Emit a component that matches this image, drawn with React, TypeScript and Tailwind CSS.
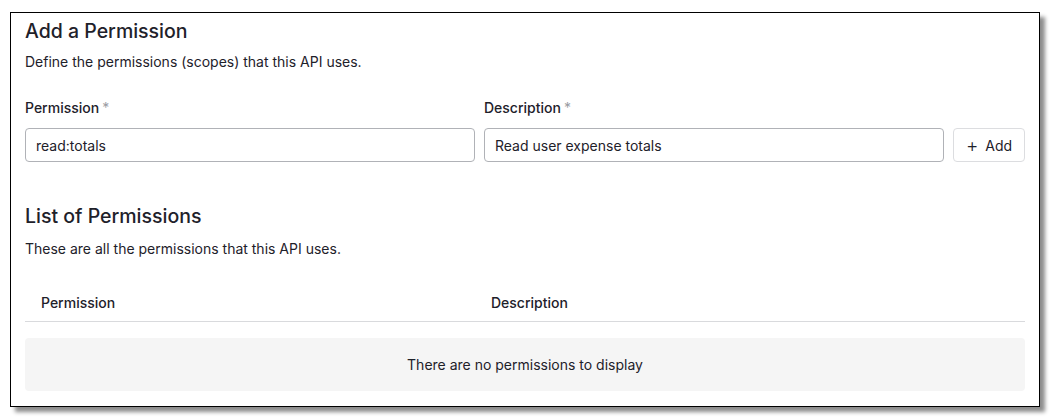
import React from "react";

export default function App() {
  return (
    <div className="w-[1050px] h-[420px] bg-white pt-[12px] pl-[10px]" style={{ fontFamily: "Inter, 'Noto Sans', sans-serif" }}>
      <div className="w-[1030px] h-[395px] border border-black bg-white shadow-[5px_5px_4px_rgba(0,0,0,0.45)] px-[14px] pt-[6px] text-[#1e212a]">
        <h2 className="text-[19.5px] leading-[24px] font-medium">Add a Permission</h2>
        <p className="mt-[9px] text-[14px] leading-[20px]">Define the permissions (scopes) that this API uses.</p>
        <div className="mt-[26px] flex gap-[9px] items-end">
          <div className="w-[450px] flex flex-col">
            <label className="text-[14px] leading-[20px] font-medium">Permission<span className="text-[#9a9ca3] font-normal ml-[3px]">*</span></label>
            <div className="mt-[10px] h-[34px] border border-[#b0b2b7] rounded-[4px] flex items-center px-[10px] text-[14px]">read:totals</div>
          </div>
          <div className="flex-1 flex flex-col">
            <label className="text-[14px] leading-[20px] font-medium">Description<span className="text-[#9a9ca3] font-normal ml-[3px]">*</span></label>
            <div className="mt-[10px] h-[34px] border border-[#b0b2b7] rounded-[4px] flex items-center px-[10px] text-[14px]">Read user expense totals</div>
          </div>
          <button className="w-[72px] h-[34px] border border-[#dcdde0] rounded-[4px] flex items-center justify-center gap-[7px] text-[14px]">
            <span className="text-[19px] leading-none font-light">+</span>
            <span>Add</span>
          </button>
        </div>
        <h2 className="mt-[42px] text-[19.5px] leading-[24px] font-medium">List of Permissions</h2>
        <p className="mt-[11px] text-[14px] leading-[20px]">These are all the permissions that this API uses.</p>
        <div className="mt-[34px] flex items-start border-b border-[#d9dadd] pb-[8px] text-[14px] leading-[20px] font-medium">
          <div className="w-[450px] pl-[16px]">Permission</div>
          <div className="pl-[16px]">Description</div>
        </div>
        <div className="mt-[16px] h-[53px] bg-[#f5f5f5] rounded-[4px] flex items-center justify-center text-[14px]">
          There are no permissions to display
        </div>
      </div>
    </div>
  );
}
